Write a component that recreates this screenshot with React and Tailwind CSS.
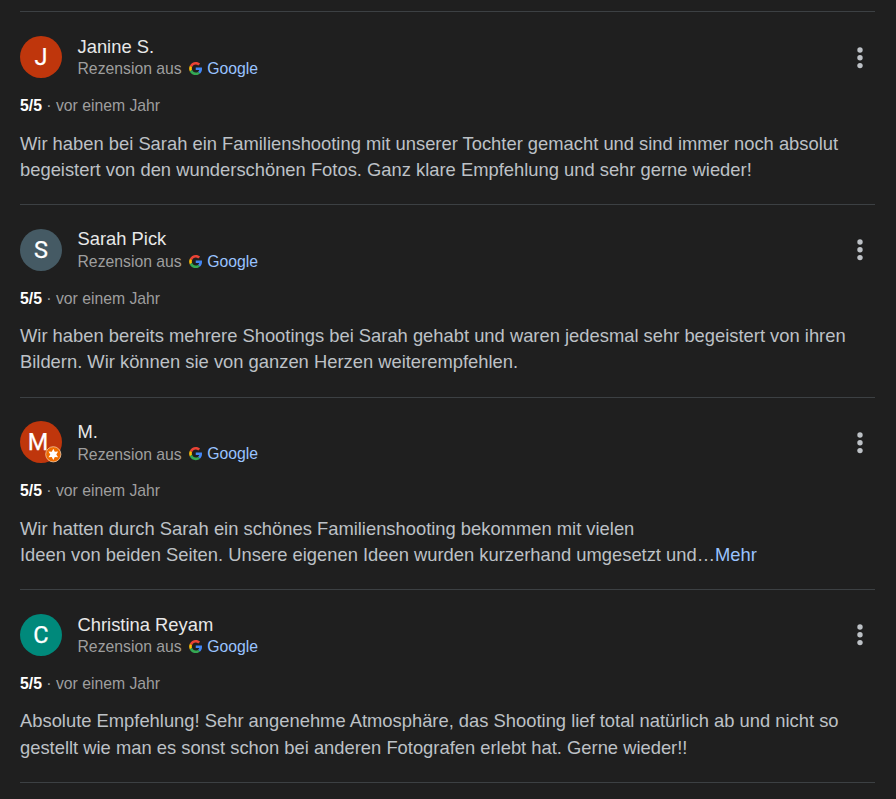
const reviews = [
  {
    name: 'Janine S.', initial: 'J', color: 'bg-[#bf360c]',
    lines: [
      'Wir haben bei Sarah ein Familienshooting mit unserer Tochter gemacht und sind immer noch absolut',
      'begeistert von den wunderschönen Fotos. Ganz klare Empfehlung und sehr gerne wieder!',
    ],
  },
  {
    name: 'Sarah Pick', initial: 'S', color: 'bg-[#455a64]',
    lines: [
      'Wir haben bereits mehrere Shootings bei Sarah gehabt und waren jedesmal sehr begeistert von ihren',
      'Bildern. Wir können sie von ganzen Herzen weiterempfehlen.',
    ],
  },
  {
    name: 'M.', initial: 'M', color: 'bg-[#bf360c]', guide: true, more: true,
    lines: [
      'Wir hatten durch Sarah ein schönes Familienshooting bekommen mit vielen',
      'Ideen von beiden Seiten. Unsere eigenen Ideen wurden kurzerhand umgesetzt und…',
    ],
  },
  {
    name: 'Christina Reyam', initial: 'C', color: 'bg-[#00897b]',
    lines: [
      'Absolute Empfehlung! Sehr angenehme Atmosphäre, das Shooting lief total natürlich ab und nicht so',
      'gestellt wie man es sonst schon bei anderen Fotografen erlebt hat. Gerne wieder!!',
    ],
  },
];

function GoogleLogo() {
  return (
    <svg viewBox="-0.5 0 48 48" className="ml-[7.5px] mr-[4.9px] size-[13.2px]">
      <path fill="#EA4335" d="M24 9.5c3.54 0 6.71 1.22 9.21 3.6l6.85-6.85C35.9 2.38 30.47 0 24 0 14.62 0 6.51 5.38 2.56 13.22l7.98 6.19C12.43 13.72 17.74 9.5 24 9.5z" />
      <path fill="#4285F4" d="M46.98 24.55c0-1.57-.15-3.09-.38-4.55H24v9.02h12.94c-.58 2.96-2.26 5.48-4.78 7.18l7.73 6c4.51-4.18 7.09-10.36 7.09-17.65z" />
      <path fill="#FBBC05" d="M10.53 28.59A14.5 14.5 0 0 1 9.77 24c0-1.6.27-3.14.76-4.59l-7.98-6.19A23.9 23.9 0 0 0 0 24c0 3.88.92 7.54 2.56 10.78l7.97-6.19z" />
      <path fill="#34A853" d="M24 48c6.48 0 11.93-2.13 15.89-5.81l-7.73-6c-2.15 1.45-4.92 2.3-8.16 2.3-6.26 0-11.57-4.22-13.47-9.91l-7.98 6.19C6.51 42.62 14.62 48 24 48z" />
    </svg>
  );
}

function GuideBadge() {
  return (
    <svg viewBox="0 0 17 17" className="absolute bottom-0 right-0 size-[17px]">
      <circle cx="8.3" cy="8.3" r="7.6" fill="#ef6c00" stroke="#f5c9a3" strokeWidth="0.8" />
      <path fill="#fff" d="M8.3 2.8 9.8 5.8 13.1 5.6 11.3 8.4 13.1 11.2 9.8 11 8.3 14 6.8 11 3.5 11.2 5.3 8.4 3.5 5.6 6.8 5.8Z" />
    </svg>
  );
}

function Review({ review }) {
  return (
    <article className="h-[192.625px] border-t border-[#3c4043] pt-[23.8px]">
      <header className="flex h-[42px] items-start">
        <div className={`relative flex size-[42px] shrink-0 items-center justify-center rounded-full ${review.color}`}>
          <span className={`mt-[1.6px] font-[Roboto,sans-serif] text-[23.5px] leading-none text-white [-webkit-text-stroke:0.25px_white] ${review.guide ? '-translate-x-[3px]' : ''}`}>
            {review.initial}
          </span>
          {review.guide && <GuideBadge />}
        </div>
        <div className="-mt-[0.4px] ml-[15.5px] flex flex-1 flex-col">
          <h3 className="h-[22.6px] text-[18.375px] leading-[22px] text-[#e8e8e8]">{review.name}</h3>
          <div className="flex h-[21px] items-center text-[15.75px] leading-[21px] text-[#9e9e9e]">
            <span>Rezension aus</span>
            <GoogleLogo />
            <a className={`text-[#99c3ff] ${review.guide ? '-mt-[2px]' : ''}`}>Google</a>
          </div>
        </div>
        <button type="button" aria-label="Mehr Optionen" className="mr-[12.4px] mt-[10.45px]">
          <svg viewBox="0 0 6 22" className="h-[22px] w-[6px]" fill="#bdc1c6">
            <circle cx="3" cy="3" r="2.7" />
            <circle cx="3" cy="10.8" r="2.7" />
            <circle cx="3" cy="18.6" r="2.7" />
          </svg>
        </button>
      </header>
      <p className="mt-[17px] h-[21px] whitespace-pre text-[15.75px] leading-[21px] text-[#9e9e9e]">
        <b className="text-white">5/5</b> · vor einem Jahr
      </p>
      <div className="mt-[14.5px] whitespace-nowrap text-[18.375px] leading-[26.25px] text-[#bdc1c6]">
        <p>{review.lines[0]}</p>
        <p>
          {review.lines[1]}
          {review.more && <a className="text-[#99c3ff]">Mehr</a>}
        </p>
      </div>
    </article>
  );
}

export default function App() {
  return (
    <main className="h-[799px] overflow-hidden bg-[#1f1f1f] pl-[20px] pr-[21px] pt-[11.3px] font-['Liberation_Sans',Arial,sans-serif]">
      {reviews.map((review) => (
        <Review key={review.name} review={review} />
      ))}
      <hr className="border-t border-[#3c4043]" />
    </main>
  );
}
